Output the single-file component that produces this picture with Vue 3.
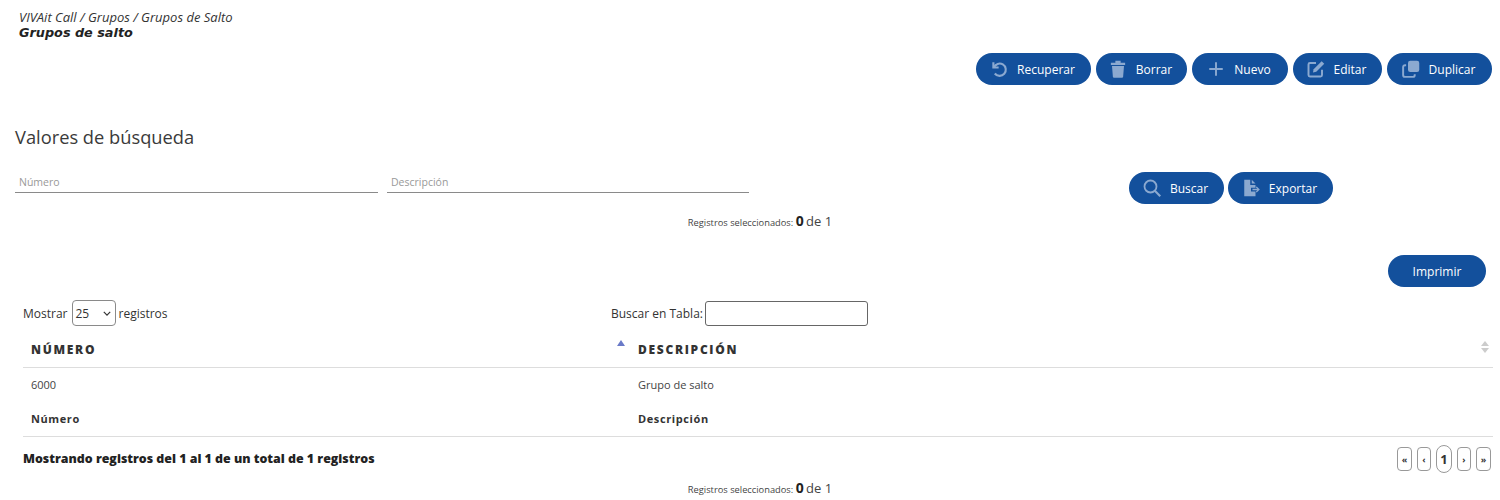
<template>
  <div class="page">
    <header class="head">
      <div class="crumbs">VIVAit Call / Grupos / Grupos de Salto</div>
      <h1>Grupos de salto</h1>
    </header>

    <div class="toolbar">
      <button v-for="b in actions" :key="b.label" class="btn" :style="{ width: b.width + 'px' }">
        <svg viewBox="0 0 24 24" class="ico" v-html="b.icon"></svg>
        <span>{{ b.label }}</span>
      </button>
    </div>

    <h2>Valores de búsqueda</h2>

    <div class="search">
      <div class="field"><input type="text" placeholder="Número" /></div>
      <div class="field"><input type="text" placeholder="Descripción" /></div>
      <div class="search_btns">
        <button v-for="b in searchActions" :key="b.label" class="btn" :style="{ width: b.width + 'px' }">
          <svg viewBox="0 0 24 24" class="ico" v-html="b.icon"></svg>
          <span>{{ b.label }}</span>
        </button>
      </div>
    </div>

    <div class="selected first">Registros seleccionados: <b>0</b> <span>de 1</span></div>

    <div class="print_row">
      <button class="btn print">Imprimir</button>
    </div>

    <div class="controls">
      <label class="show">
        Mostrar
        <span class="select_wrap">
          <select>
            <option>25</option>
            <option>50</option>
            <option>100</option>
          </select>
          <svg viewBox="0 0 10 6" class="chevron"><path d="M1 1l4 4 4-4" fill="none" stroke="#333" stroke-width="1.5" /></svg>
        </span>
        registros
      </label>
      <label class="filter">
        Buscar en Tabla:
        <input type="text" />
      </label>
    </div>

    <table>
      <thead>
        <tr>
          <th class="col_num">
            Número
            <i class="sort_up"></i>
          </th>
          <th>
            Descripción
            <i class="sort_both"></i>
          </th>
        </tr>
      </thead>
      <tbody>
        <tr v-for="row in rows" :key="row.num">
          <td>{{ row.num }}</td>
          <td>{{ row.desc }}</td>
        </tr>
      </tbody>
      <tfoot>
        <tr>
          <th>Número</th>
          <th>Descripción</th>
        </tr>
      </tfoot>
    </table>

    <div class="table_foot">
      <div class="info">Mostrando registros del 1 al 1 de un total de 1 registros</div>
      <div class="pager">
        <a>«</a>
        <a>‹</a>
        <a class="current">1</a>
        <a>›</a>
        <a>»</a>
      </div>
    </div>

    <div class="selected last">Registros seleccionados: <b>0</b> <span>de 1</span></div>
  </div>
</template>

<script setup>
const actions = [
  {
    label: 'Recuperar',
    width: 115,
    icon: '<path d="M4.5 3v7h7" fill="none" stroke="currentColor" stroke-width="2.8"/><path d="M5.2 10A8.2 8.2 0 1 1 6.4 18" fill="none" stroke="currentColor" stroke-width="2.8"/>',
  },
  {
    label: 'Borrar',
    width: 91,
    icon: '<path d="M2.5 3.5h19v3h-19z M8.5 1h7v3h-7z M4 8h16l-1.2 14.5a1.5 1.5 0 0 1-1.5 1H6.7a1.5 1.5 0 0 1-1.5-1z" fill="currentColor"/>',
  },
  {
    label: 'Nuevo',
    width: 96,
    icon: '<path d="M12 3v18M3 12h18" fill="none" stroke="currentColor" stroke-width="2.6"/>',
  },
  {
    label: 'Editar',
    width: 89,
    icon: '<path d="M20 13v7a2 2 0 0 1-2 2H4a2 2 0 0 1-2-2V6a2 2 0 0 1 2-2h8" fill="none" stroke="currentColor" stroke-width="2.6"/><path d="M8 16.500l.8-4.300L19.500 1.500l3.500 3.500L12.300 15.700z" fill="currentColor"/>',
  },
  {
    label: 'Duplicar',
    width: 105,
    icon: '<rect x="8" y="1" width="15" height="15" rx="3" fill="currentColor"/><path d="M5.500 7H4a2.500 2.500 0 0 0-2.500 2.500V20A2.500 2.500 0 0 0 4 22.500h10.500A2.500 2.500 0 0 0 17 20v-1" fill="none" stroke="currentColor" stroke-width="2.6"/>',
  },
];

const searchActions = [
  {
    label: 'Buscar',
    width: 95,
    icon: '<circle cx="10" cy="10" r="8" fill="none" stroke="currentColor" stroke-width="2.4"/><path d="M15.800 15.800L23 23" fill="none" stroke="currentColor" stroke-width="2.800"/>',
  },
  {
    label: 'Exportar',
    width: 105,
    icon: '<path d="M3 1h8v7h7v3.500h-6v5h6V23H3z M13 1l5 5h-5z" fill="currentColor"/><path d="M14 14h8M19 10.500l3.500 3.500-3.500 3.500" fill="none" stroke="currentColor" stroke-width="1.800"/>',
  },
];

const rows = [{ num: '6000', desc: 'Grupo de salto' }];
</script>

<style>
body {
  background: #fff;
}
</style>

<style scoped>
.page {
  width: 1500px;
  height: 500px;
  overflow: hidden;
  font-family: "Open Sans", "Noto Sans", sans-serif;
  color: #333;
}

.head {
  padding: 10px 0 0 19px;
}

.crumbs {
  font-size: 13px;
  line-height: 15px;
  font-style: italic;
}

h1 {
  margin: 0;
  font-family: "DejaVu Sans", sans-serif;
  font-size: 12.8px;
  line-height: 15px;
  font-style: italic;
  font-weight: 700;
  color: #222;
}

.toolbar {
  display: flex;
  justify-content: flex-end;
  gap: 5px;
  margin-top: 13px;
  padding-right: 8px;
}

.btn {
  display: flex;
  align-items: center;
  justify-content: center;
  gap: 9px;
  height: 32px;
  padding: 0 2px 0 0;
  border: none;
  border-radius: 16px;
  background: #13509c;
  color: #fff;
  font-family: inherit;
  font-size: 12px;
  cursor: pointer;
}

.ico {
  width: 18px;
  height: 18px;
  color: #8ba9d0;
}

h2 {
  margin: 41px 0 0 15px;
  font-size: 18.3px;
  line-height: 22px;
  font-weight: 400;
  color: #3a3a3a;
}

.search {
  display: flex;
  align-items: flex-start;
  margin-top: 24px;
  padding-left: 15px;
}

.field {
  width: 363px;
  margin-right: 9px;
}

.field:nth-child(2) {
  width: 362px;
}

.field input {
  display: block;
  width: 100%;
  box-sizing: border-box;
  height: 21px;
  padding: 0 4px;
  border: none;
  border-bottom: 1px solid #8a8a8a;
  outline: none;
  font-family: inherit;
  font-size: 10.5px;
}

.field input::placeholder {
  color: #999;
}

.search_btns {
  display: flex;
  gap: 4px;
  margin-left: 371px;
}

.selected {
  text-align: center;
  font-size: 9.3px;
  line-height: 18px;
  color: #444;
  padding-left: 20px;
}

.selected b {
  font-size: 14px;
  color: #222;
}

.selected span {
  font-size: 13px;
}

.first {
  margin-top: 8px;
}

.print_row {
  display: flex;
  justify-content: flex-end;
  margin-top: 23px;
  padding-right: 14px;
}

.btn.print {
  width: 98px;
  padding: 0;
}

.controls {
  display: flex;
  align-items: center;
  margin-top: 13px;
  padding-left: 23px;
  font-size: 12px;
}

.show {
  display: flex;
  align-items: center;
  gap: 4px;
  width: 588px;
}

.select_wrap {
  position: relative;
  display: block;
  height: 26px;
  margin: 0 -2px 0 1px;
}

.select_wrap select {
  appearance: none;
  display: block;
  width: 44px;
  height: 26px;
  padding: 0 0 0 2px;
  border: 1px solid #8a8a8a;
  border-radius: 4px;
  background: #fff;
  color: #333;
  font-family: inherit;
  font-size: 12px;
}

.chevron {
  position: absolute;
  top: 11px;
  right: 5px;
  width: 8px;
  height: 5px;
}

.filter {
  display: flex;
  align-items: center;
  gap: 2px;
}

.filter input {
  box-sizing: border-box;
  width: 163px;
  height: 25px;
  border: 1px solid #666;
  border-radius: 3px;
  outline: none;
}

table {
  width: 1470px;
  margin: 6px 0 0 23px;
  border-collapse: collapse;
  table-layout: fixed;
  font-size: 11px;
}

th,
td {
  padding: 0 8px;
  text-align: left;
}

thead th {
  position: relative;
  height: 35px;
  border-bottom: 1px solid #ddd;
  font-size: 12px;
  letter-spacing: 1.7px;
  text-transform: uppercase;
  font-weight: 800;
}

.col_num {
  width: 591px;
}

td {
  height: 33px;
  color: #444;
}

tfoot th {
  height: 35px;
  border-bottom: 1px solid #ddd;
  font-size: 11px;
  letter-spacing: 0.6px;
  font-weight: 700;
}

.sort_up {
  position: absolute;
  top: 8px;
  right: 5px;
  border: 4px solid transparent;
  border-top: none;
  border-bottom: 6px solid #6a7ac8;
}

.sort_both {
  position: absolute;
  top: 9px;
  right: 4px;
  width: 0;
  height: 0;
  border: 4px solid transparent;
  border-top: none;
  border-bottom: 5px solid #ccc;
}

.sort_both::after {
  content: "";
  position: absolute;
  top: 7px;
  left: -4px;
  border: 4px solid transparent;
  border-bottom: none;
  border-top: 5px solid #ccc;
}

.table_foot {
  display: flex;
  justify-content: space-between;
  align-items: center;
  width: 1468px;
  height: 28px;
  margin: 8px 0 0 23px;
}

.info {
  margin-top: -2px;
  font-size: 12.4px;
  font-weight: 800;
  color: #222;
}

.pager {
  display: flex;
  align-items: center;
  gap: 5px;
}

.pager a {
  display: flex;
  align-items: center;
  justify-content: center;
  box-sizing: border-box;
  width: 14px;
  height: 24px;
  border: 1px solid #999;
  border-radius: 4px;
  font-size: 9px;
  font-weight: 700;
}

.pager a:first-child,
.pager a:last-child {
  width: 15px;
}

.pager .current {
  width: 16px;
  height: 28px;
  border-radius: 8px;
  font-size: 13px;
}

.last {
  margin-top: 6px;
}
</style>
